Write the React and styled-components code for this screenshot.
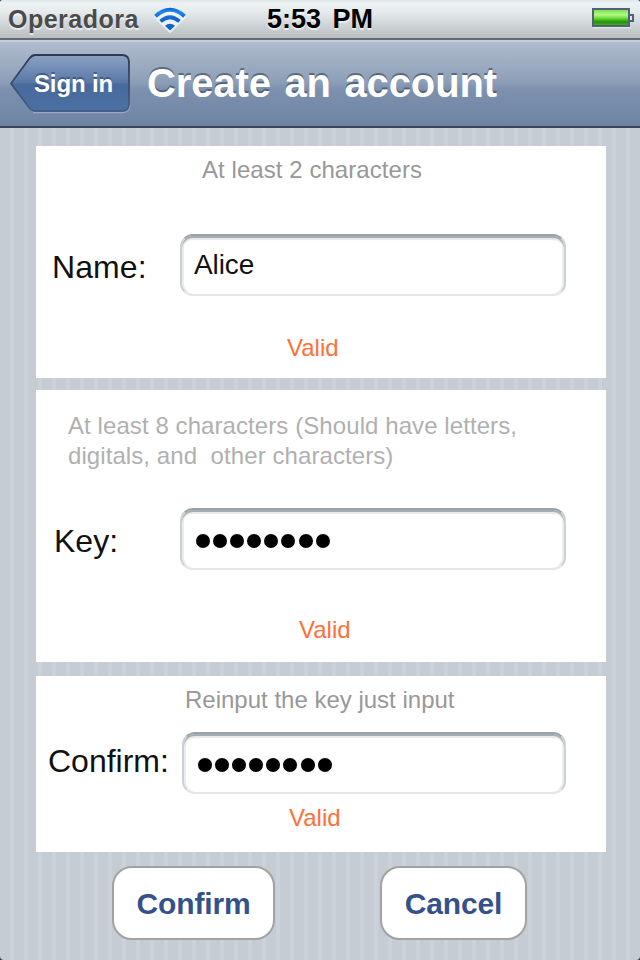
import React from 'react';
import styled, { createGlobalStyle } from 'styled-components';

const Global = createGlobalStyle`
  * { box-sizing: border-box; }
  body { margin: 0; background: #34383c; }
`;

const Screen = styled.div`
  width: 640px;
  height: 960px;
  overflow: hidden;
  border-radius: 3px 3px 4px 4px;
  font-family: "Liberation Sans", Arial, Helvetica, sans-serif;
  background: repeating-linear-gradient(90deg,
    #c5ccd4 0 9.5px, #cbd2d9 10.5px 13.5px, #c5ccd4 14px);
`;

const StatusBar = styled.header`
  height: 40px;
  display: grid;
  grid-template-columns: 1fr auto 1fr;
  line-height: 38px;
  font-weight: bold;
  color: #000;
  background: linear-gradient(#dfe4e6 0, #edf2f4 3px, #e5ebed 12px, #b9bfc1 38px);
  border-bottom: 2px solid #666b70;
  text-shadow: 0 2px 0 rgba(255, 255, 255, 0.6);
`;

const Carrier = styled.div`
  display: flex;
  padding-left: 8px;
  font-size: 25px;
  letter-spacing: 0.5px;
  color: #4b4b4b;
`;

const WifiIcon = styled.svg`
  width: 34px;
  height: 26px;
  margin: 7px 0 0 14px;
`;

const Clock = styled.div`
  font-size: 27px;
  word-spacing: 4px;
`;

const BatterySlot = styled.div`
  display: flex;
  justify-content: flex-end;
  padding: 7px 5px 0 0;
`;

const NavBar = styled.nav`
  height: 88px;
  display: flex;
  padding: 12px 0 0 9px;
  border-top: 2px solid #c3cedb;
  border-bottom: 2px solid #384454;
  background: linear-gradient(#b0bccd 0, #8c9eb7 48%, #7d91af 56%, #6d84a2 100%);
`;

const BackButton = styled.button`
  width: 123px;
  height: 60px;
  padding: 0;
  border: 0;
  background: none;
  display: grid;
  font: bold 24px/60px "Liberation Sans", Arial, sans-serif;
  letter-spacing: -0.15px;
  color: #fff;
  text-shadow: 0 -2px 0 rgba(40, 60, 95, 0.55);

  & > * { grid-area: 1 / 1; }
`;

const BackLabel = styled.span`
  text-align: left;
  padding-left: 25px;
  z-index: 1;
`;

const Title = styled.h1`
  margin: -1px 0 0 15px;
  font-size: 40px;
  line-height: 60px;
  letter-spacing: -0.1px;
  word-spacing: 2.5px;
  color: #fff;
  text-shadow: 0 -2px 0 rgba(50, 65, 85, 0.6);
`;

const Form = styled.main`
  padding: 18px 34px 0 36px;
`;

const Panel = styled.section`
  height: ${(p) => p.$height}px;
  margin-bottom: ${(p) => p.$gap}px;
  padding-top: ${(p) => p.$top}px;
  background: #fff;
`;

const Hint = styled.p`
  margin: 0;
  padding-left: ${(p) => p.$left}px;
  font-size: 24px;
  line-height: 30px;
  letter-spacing: ${(p) => p.$spacing || 0}px;
  white-space: pre;
  color: ${(p) => (p.$faint ? '#b0b0b0' : '#989898')};
`;

const Status = styled(Hint)`
  color: #ff6f38;
`;

const FieldRow = styled.div`
  height: 62px;
  display: flex;
  margin: ${(p) => p.$above}px 0 ${(p) => p.$below}px;
`;

const Label = styled.label`
  width: ${(p) => p.$width}px;
  height: 62px;
  padding-left: ${(p) => p.$left}px;
  margin-top: ${(p) => p.$drop}px;
  font-size: 32px;
  line-height: 62px;
  letter-spacing: ${(p) => p.$spacing}px;
  white-space: nowrap;
  color: #111;
`;

const Field = styled.div`
  width: ${(p) => p.$width}px;
  height: 62px;
  display: flex;
  align-items: center;
  gap: 3.2px;
  padding: ${(p) => p.$drop || 0}px 0 0 ${(p) => p.$inset || 12}px;
  font-size: 28px;
  letter-spacing: -0.1px;
  color: #111;
  border: 2px solid;
  border-color: #98a2af #cbd0d7 #e3e5e8;
  border-radius: 13px;
  background: #fff;
  box-shadow: inset 0 2px 0 #a9acb0, inset 0 4px 1px #e8e8e8,
    inset 2px 0 0 #ededed, inset -2px 0 0 #ededed;
`;

const Dot = styled.i`
  width: 14px;
  height: 14px;
  border-radius: 50%;
  background: #000;
`;

const Actions = styled.div`
  display: flex;
  gap: 105px;
  padding: 14px 0 0 76px;
`;

const ActionButton = styled.button`
  width: ${(p) => p.$width}px;
  height: 74px;
  padding: 1px 0 0;
  border: 2px solid #a1a2a3;
  border-radius: 20px;
  background: #fff;
  font: bold 30px "Liberation Sans", Arial, sans-serif;
  letter-spacing: -0.15px;
  color: #34518a;
`;

const Wifi = () => (
  <WifiIcon viewBox="0 0 34 26">
    <defs>
      <linearGradient id="signal" x1="0" y1="0" x2="0" y2="24" gradientUnits="userSpaceOnUse">
        <stop offset="0" stopColor="#1056c4" />
        <stop offset=".2" stopColor="#2387ea" />
        <stop offset=".45" stopColor="#1468d4" />
        <stop offset="1" stopColor="#0e5cd0" />
      </linearGradient>
    </defs>
    <path d="M2 10Q17-3.500 32 10L17 25Z" fill="#f4f8fb" stroke="#f4f8fb" strokeWidth="2" opacity=".75" />
    <g fill="none" stroke="url(#signal)" strokeWidth="3.8">
      <path d="M2.500 9.200Q17-3.500 31.500 9.200" />
      <path d="M7.500 14.400Q17 6 26.500 14.400" />
    </g>
    <path d="M12 18.800Q17 14.500 22 18.800L17 23.500Z" fill="url(#signal)" />
  </WifiIcon>
);

const Battery = () => (
  <svg width="43" height="22" viewBox="0 0 43 22">
    <defs>
      <linearGradient id="charge" x2="0" y2="1">
        <stop offset="0" stopColor="#72df47" />
        <stop offset=".35" stopColor="#b2fa82" />
        <stop offset=".55" stopColor="#69d63d" />
        <stop offset=".75" stopColor="#249405" />
        <stop offset="1" stopColor="#45b51f" />
      </linearGradient>
    </defs>
    <path d="M1 20.500H39" stroke="#e4e8ea" strokeWidth="1.500" />
    <rect x="1" y="2" width="36" height="17" fill="url(#charge)" stroke="#526078" strokeWidth="2" />
    <path d="M38 8H41V14H38" fill="#dde2e5" stroke="#526078" strokeWidth="2" />
  </svg>
);

const BackShape = () => (
  <svg width="123" height="60" viewBox="0 0 123 60">
    <defs>
      <linearGradient id="back" x2="0" y2="1">
        <stop offset="0" stopColor="#8ca2c3" />
        <stop offset=".49" stopColor="#5878a8" />
        <stop offset=".52" stopColor="#486a9c" />
        <stop offset="1" stopColor="#4c70a3" />
      </linearGradient>
      <linearGradient id="edge" x2="0" y2="1">
        <stop offset="0" stopColor="#2e3b4e" />
        <stop offset="1" stopColor="#445f8b" />
      </linearGradient>
    </defs>
    <path d="M24 58.500H113Q120 58.500 121 51" fill="none" stroke="#98a9c1" strokeWidth="1.500" />
    <path d="M26 1H113Q120 1 120 8V50Q120 57 113 57H26Q23 57 20 53.500L2 29.500L20 5Q23 1 26 1Z"
      fill="url(#back)" stroke="url(#edge)" strokeWidth="1.8" />
  </svg>
);

const Dots = () => Array.from({ length: 8 }, (_, i) => <Dot key={i} />);

export default function App() {
  return (
    <Screen>
      <Global />
      <StatusBar>
        <Carrier>Operadora<Wifi /></Carrier>
        <Clock>5:53 PM</Clock>
        <BatterySlot><Battery /></BatterySlot>
      </StatusBar>
      <NavBar>
        <BackButton><BackShape /><BackLabel>Sign in</BackLabel></BackButton>
        <Title>Create an account</Title>
      </NavBar>
      <Form>
        <Panel $height={232} $gap={12} $top={9}>
          <Hint $left={166} $spacing={0.06}>At least 2 characters</Hint>
          <FieldRow $above={49} $below={37}>
            <Label $width={144} $left={16} $drop={2} $spacing={0.1}>Name:</Label>
            <Field $width={386}>Alice</Field>
          </FieldRow>
          <Status $left={251}>Valid</Status>
        </Panel>
        <Panel $height={272} $gap={14} $top={21}>
          <Hint $left={32} $faint $spacing={0.08}>{'At least 8 characters (Should have letters,\ndigitals, and  other characters)'}</Hint>
          <FieldRow $above={37} $below={45}>
            <Label $width={144} $left={18} $drop={2} $spacing={0}>Key:</Label>
            <Field $width={386} $inset={13.5} $drop={4}><Dots /></Field>
          </FieldRow>
          <Status $left={263}>Valid</Status>
        </Panel>
        <Panel $height={176} $gap={0} $top={9}>
          <Hint $left={149}>Reinput the key just input</Hint>
          <FieldRow $above={17} $below={9}>
            <Label $width={146} $left={12} $drop={-2} $spacing={0}>Confirm:</Label>
            <Field $width={384} $inset={13.5} $drop={4}><Dots /></Field>
          </FieldRow>
          <Status $left={253}>Valid</Status>
        </Panel>
        <Actions>
          <ActionButton $width={163}>Confirm</ActionButton>
          <ActionButton $width={147}>Cancel</ActionButton>
        </Actions>
      </Form>
    </Screen>
  );
}
